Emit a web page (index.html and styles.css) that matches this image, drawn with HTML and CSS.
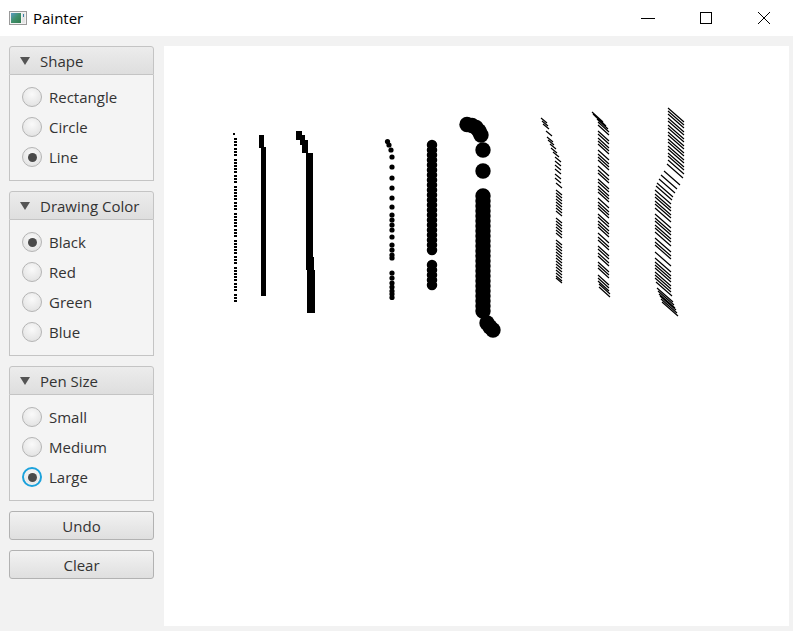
FILE: index.html
```html
<!DOCTYPE html>
<html>
<head>
<meta charset="utf-8">
<title>Painter</title>
<link rel="stylesheet" href="styles.css">
</head>
<body>
<div class="window">
  <div class="titlebar">
    <svg class="app-icon" width="18" height="14" viewBox="0 0 18 14">
      <defs>
        <linearGradient id="ig" x1="0" y1="0" x2="1" y2="1">
          <stop offset="0" stop-color="#5a9bc4"/>
          <stop offset="0.5" stop-color="#3f8f6a"/>
          <stop offset="1" stop-color="#2f7a4e"/>
        </linearGradient>
      </defs>
      <rect x="0.5" y="0.5" width="17" height="13" fill="#f2f2f2" stroke="#9a9a9a"/>
      <rect x="2" y="2" width="10" height="10" fill="url(#ig)"/>
      <rect x="13" y="2" width="3" height="10" fill="#e4e4e4"/>
      <rect x="14" y="3" width="1" height="3" fill="#3b7fa8"/>
    </svg>
    <span class="title">Painter</span>
    <div class="controls">
      <span class="ctl"><svg width="14" height="14" viewBox="0 0 14 14"><path d="M0 7.5h14" stroke="#000" stroke-width="1"/></svg></span>
      <span class="ctl"><svg width="14" height="14" viewBox="0 0 14 14"><rect x="1.5" y="1.5" width="11" height="11" fill="none" stroke="#000" stroke-width="1"/></svg></span>
      <span class="ctl"><svg width="14" height="14" viewBox="0 0 14 14"><path d="M1 1L13 13M13 1L1 13" stroke="#000" stroke-width="1"/></svg></span>
    </div>
  </div>
  <div class="main">
    <div class="sidebar">
      <div class="pane">
        <div class="pane-head"><span class="arrow"></span>Shape</div>
        <div class="pane-body">
          <label class="radio"><span class="dot"></span>Rectangle</label>
          <label class="radio"><span class="dot"></span>Circle</label>
          <label class="radio"><span class="dot on"></span>Line</label>
        </div>
      </div>
      <div class="pane">
        <div class="pane-head"><span class="arrow"></span>Drawing Color</div>
        <div class="pane-body">
          <label class="radio"><span class="dot on"></span>Black</label>
          <label class="radio"><span class="dot"></span>Red</label>
          <label class="radio"><span class="dot"></span>Green</label>
          <label class="radio"><span class="dot"></span>Blue</label>
        </div>
      </div>
      <div class="pane">
        <div class="pane-head"><span class="arrow"></span>Pen Size</div>
        <div class="pane-body">
          <label class="radio"><span class="dot"></span>Small</label>
          <label class="radio"><span class="dot"></span>Medium</label>
          <label class="radio"><span class="dot on focus"></span>Large</label>
        </div>
      </div>
      <button class="btn">Undo</button>
      <button class="btn">Clear</button>
    </div>
    <div class="canvas">
      <svg class="drawing" width="625" height="580" viewBox="164 46 625 580">
        <!-- small rectangles -->
        <rect x="233" y="133" width="2" height="2" fill="#000"/>
        <path d="M235.5 138V302" stroke="#000" stroke-width="3" stroke-dasharray="2 1 2 1 2 2 2 1 2 1 2 3 2 1 2 1"/>
        <!-- medium rectangles -->
        <polygon points="259,135 264,135 264,147 266,147 266,296 261,296 261,148 259,148" fill="#000"/>
        <!-- large rectangles -->
        <polygon points="296,131 302,131 302,135 305,135 305,140 308,140 308,153 313,153 313,257 314,257 314,270 315,270 315,313 307,313 307,270 306,270 306,153 302,153 302,145 300,145 300,140 296,140" fill="#000"/>
        <!-- small circles -->
        <g fill="#000">
          <circle cx="387.5" cy="141.5" r="2.6"/>
          <circle cx="389" cy="145" r="2.6"/>
          <circle cx="391" cy="150" r="2.6"/>
          <circle cx="392" cy="157" r="2.6"/>
          <circle cx="392" cy="167" r="2.6"/>
          <circle cx="392" cy="178" r="2.6"/>
          <circle cx="392" cy="188" r="2.6"/>
          <circle cx="392" cy="198" r="2.6"/>
          <circle cx="392" cy="207" r="2.6"/>
          <circle cx="392" cy="215" r="2.6"/>
          <circle cx="392" cy="220" r="2.6"/>
          <circle cx="392" cy="225" r="2.6"/>
          <circle cx="392" cy="230" r="2.6"/>
          <circle cx="392" cy="237" r="2.6"/>
          <circle cx="392" cy="245" r="2.6"/>
          <circle cx="392" cy="250" r="2.6"/>
          <circle cx="392" cy="255" r="2.6"/>
          <circle cx="392" cy="258" r="2.6"/>
          <circle cx="392" cy="273" r="2.6"/>
          <circle cx="392" cy="278" r="2.6"/>
          <circle cx="392" cy="283" r="2.6"/>
          <circle cx="392" cy="287" r="2.6"/>
          <circle cx="392" cy="291" r="2.6"/>
          <circle cx="392" cy="294" r="2.6"/>
          <circle cx="392" cy="297.5" r="2.6"/>
        </g>
        <!-- medium circles -->
        <path d="M432 145V252M432 265V287" stroke="#000" stroke-width="10.5" stroke-linecap="round" stroke-dasharray="0 5"/>
        <!-- large circles -->
        <g fill="#000">
          <circle cx="467" cy="124.5" r="7.7"/>
          <circle cx="472" cy="125.5" r="7.7"/>
          <circle cx="476" cy="127.5" r="7.7"/>
          <circle cx="479" cy="131" r="7.7"/>
          <circle cx="481" cy="135" r="7.7"/>
          <circle cx="483" cy="150" r="7.7"/>
          <circle cx="483" cy="171" r="7.7"/>
          <circle cx="487" cy="323" r="7.7"/>
          <circle cx="490" cy="327" r="7.7"/>
          <circle cx="493" cy="330" r="7.7"/>
        </g>
        <path d="M483 196V316" stroke="#000" stroke-width="15.4" stroke-linecap="round" stroke-dasharray="0 5"/>
        <!-- small lines -->
        <path stroke="#000" stroke-width="1.2" fill="none" d="M541 118l6 5M542 121l6 5M543 124l6 5M546 131l6 5M547 137l6 5M548 140l6 5M550 144l6 5M551 148l6 5M553 152l6 5M555 157l6 5M555 161l6 5M555 165l6 5M555 169l6 5M555 174l6 5M555 178l6 5M556 183l6 5M556 190l6 5M556 193l6 5M556 196l6 5M556 199l6 5M556 202l6 5M556 205l6 5M556 208l6 5M556 211l6 5M556 218l6 5M556 221l6 5M556 224l6 5M556 227l6 5M556 230l6 5M556 233l6 5M556 240l6 5M556 243l6 5M556 246l6 5M556 249l6 5M556 252l6 5M556 255l6 5M556 258l6 5M556 261l6 5M556 264l6 5M556 267l6 5M556 270l6 5M556 273l6 5M556 276l6 5M556 278l6 5"/>
        <!-- medium lines -->
        <path stroke="#000" stroke-width="1.2" fill="none" d="M592 112l11 10M593 114l11 10M595 116l11 10M597 119l11 10M598 122l11 10M598 125l11 10M598 131l11 10M598 134l11 10M598 138l11 10M598 141l11 10M598 144l11 10M598 150l11 10M598 154l11 10M598 157l11 10M598 160l11 10M598 166l11 10M598 170l11 10M598 173l11 10M598 179l11 10M598 182l11 10M598 186l11 10M598 189l11 10M598 192l11 10M598 198l11 10M598 202l11 10M598 205l11 10M598 208l11 10M598 214l11 10M598 217l11 10M598 221l11 10M598 224l11 10M598 227l11 10M598 233l11 10M598 237l11 10M598 240l11 10M598 246l11 10M598 249l11 10M598 253l11 10M598 256l11 10M598 262l11 10M598 265l11 10M598 268l11 10M598 275l11 10M598 278l11 10M598 281l11 10M599 284l11 10M599 287l11 10"/>
        <!-- large lines -->
        <path stroke="#000" stroke-width="1.2" fill="none" d="M668 108l16 14M668 111l16 14M668 114l16 14M668 118l16 14M668 121l16 14M668 125l16 14M668 128l16 14M668 132l16 14M668 135l16 14M668 139l16 14M668 142l16 14M668 146l16 14M668 149l16 14M668 153l16 14M668 156l16 14M668 160l16 14M667 164l16 14M664 171l16 14M661 175l16 14M659 179l16 14M657 183l16 14M656 186l16 14M655 190l16 14M655 194l16 14M655 197l16 14M655 201l16 14M655 204l16 14M655 208l16 14M655 214l16 14M655 218l16 14M655 221l16 14M655 225l16 14M655 228l16 14M655 232l16 14M655 238l16 14M655 242l16 14M655 245l16 14M655 252l16 14M655 258l16 14M655 262l16 14M655 265l16 14M655 268l16 14M655 272l16 14M655 275l16 14M655 278l16 14M656 282l16 14M657 288l16 14M658 291l16 14M659 294l16 14M660 296l16 14M661 299l16 14M662 302l16 14"/>
      </svg>
    </div>
  </div>
</div>
</body>
</html>
```
FILE: styles.css
```css
* { box-sizing: border-box; }
html, body { margin: 0; padding: 0; }
body {
  width: 793px;
  height: 631px;
  overflow: hidden;
  font-family: "Open Sans", "Noto Sans", sans-serif;
  font-size: 15px;
  color: #333;
}
.window {
  width: 793px;
  height: 631px;
  display: flex;
  flex-direction: column;
  background: #f2f2f2;
}
.titlebar {
  height: 36px;
  background: #fff;
  display: flex;
  align-items: center;
  padding-left: 9px;
  flex: none;
}
.app-icon { flex: none; margin-top: -1px; }
.title {
  margin-left: 6px;
  color: #000;
  font-size: 15px;
  margin-top: -1px;
}
.controls {
  margin-left: auto;
  display: flex;
  height: 100%;
}
.ctl {
  width: 58px;
  height: 100%;
  display: flex;
  align-items: center;
  justify-content: center;
}
.main {
  flex: 1;
  display: flex;
  gap: 10px;
  padding: 10px 4px 5px 9px;
  min-height: 0;
}
.sidebar {
  width: 145px;
  flex: none;
  display: flex;
  flex-direction: column;
  gap: 10px;
}
.pane { display: flex; flex-direction: column; }
.pane-head {
  height: 29px;
  border: 1px solid #c4c4c4;
  border-radius: 3px 3px 0 0;
  background: linear-gradient(#ececec, #dedede);
  display: flex;
  align-items: center;
  padding-left: 10px;
  color: #333;
}
.arrow {
  width: 0;
  height: 0;
  border-left: 5px solid transparent;
  border-right: 5px solid transparent;
  border-top: 8px solid #545454;
  margin-right: 10px;
  margin-top: 1px;
}
.pane-body {
  border: 1px solid #c4c4c4;
  border-top: none;
  background: #f4f4f4;
  padding: 7px 0 8px 12px;
  display: flex;
  flex-direction: column;
}
.radio {
  height: 30px;
  display: flex;
  align-items: center;
  gap: 7px;
  color: #333;
}
.dot {
  width: 20px;
  height: 20px;
  border-radius: 50%;
  border: 1px solid #b4b4b4;
  background: radial-gradient(circle at 50% 35%, #fafafa 0%, #e6e6e6 70%, #dcdcdc 100%);
  display: flex;
  align-items: center;
  justify-content: center;
  flex: none;
}
.dot.on::after {
  content: "";
  width: 9px;
  height: 9px;
  border-radius: 50%;
  background: #4a4a4a;
}
.dot.focus {
  border: 2px solid #1ca2dc;
  box-shadow: inset 0 0 0 1px #f4f4f4;
}
.btn {
  height: 29px;
  border: 1px solid #b2b2b2;
  border-radius: 3px;
  background: linear-gradient(#f2f2f2, #dfdfdf);
  font-family: inherit;
  font-size: 15px;
  color: #333;
  padding: 0;
}
.canvas {
  flex: 1;
  background: #fff;
  min-width: 0;
  overflow: hidden;
}
.drawing { display: block; }
```
